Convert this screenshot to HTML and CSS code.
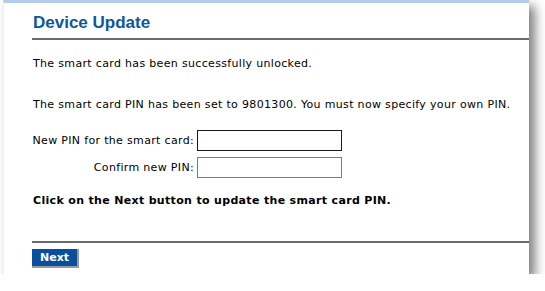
FILE: index.html
```html
<!DOCTYPE html>
<html lang="en">
<head>
  <meta charset="UTF-8">
  <title>Device Update</title>
  <link rel="stylesheet" href="styles.css">
</head>
<body>
  <div class="panel">
    <h1 class="titulo">Device Update</h1>
    <p class="msg">The smart card has been successfully unlocked.</p>
    <p class="msg msg-pin">The smart card PIN has been set to 9801300. You must now specify your own PIN.</p>

    <div class="form">
      <div class="fila">
        <label for="pin1">New PIN for the smart card:</label>
        <input id="pin1" type="password" class="activo">
      </div>
      <div class="fila">
        <label for="pin2">Confirm new PIN:</label>
        <input id="pin2" type="password">
      </div>
    </div>

    <p class="aviso">Click on the Next button to update the smart card PIN.</p>

    <div class="pie">
      <button class="btn-next">Next</button>
    </div>
  </div>
</body>
</html>
```

FILE: styles.css
```css
body {
  margin: 0;
  background: #ffffff;
  font-family: 'DejaVu Sans', Verdana, sans-serif;
  font-size: 11px;
  letter-spacing: 0.33px;
  color: #000;
}

.panel {
  width: 526px;
  height: 274px;
  margin-left: 3px;
  box-sizing: border-box;
  border-top: 3px solid #b3cdea;
  border-left: 1px solid #f0f0f0;
  background: #fff;
  padding: 0 0 0 28px;
  box-shadow: 6px 6px 10px rgba(0, 0, 0, 0.5);
}

.titulo {
  margin: 0;
  padding: 11px 0 7px 1px;
  font-family: 'Liberation Sans', Arial, sans-serif;
  font-size: 17px;
  letter-spacing: 0;
  font-weight: bold;
  color: #0b57a3;
  border-bottom: 2px solid #6a6a6a;
  line-height: 17px;
}

.msg {
  margin: 17px 0 0 1px;
  line-height: 13px;
}

.msg-pin {
  margin-top: 28px;
}

.form {
  margin-top: 19px;
  display: grid;
  grid-template-columns: 165px auto;
  row-gap: 6px;
}

.fila {
  display: contents;
}

.fila label {
  text-align: right;
  align-self: center;
  padding-right: 3px;
}

.fila input {
  width: 145px;
  height: 21px;
  box-sizing: border-box;
  border: 1px solid #7a7a7a;
  margin: 0;
  padding: 0 2px;
}

.fila input.activo {
  border-color: #1a1a1a;
}

.aviso {
  margin: 16px 0 0 1px;
  font-weight: bold;
  line-height: 13px;
}

.pie {
  margin-top: 34px;
  border-top: 2px solid #6a6a6a;
  padding-top: 6px;
}

.btn-next {
  background-color: #0a4f9e;
  color: #fff;
  font-family: 'DejaVu Sans', Verdana, sans-serif;
  font-size: 11px;
  font-weight: bold;
  letter-spacing: 0;
  border: none;
  border-right: 2px solid #9a9a9a;
  border-bottom: 2px solid #9a9a9a;
  width: 47px;
  height: 19px;
  padding: 0;
  cursor: pointer;
}
```
